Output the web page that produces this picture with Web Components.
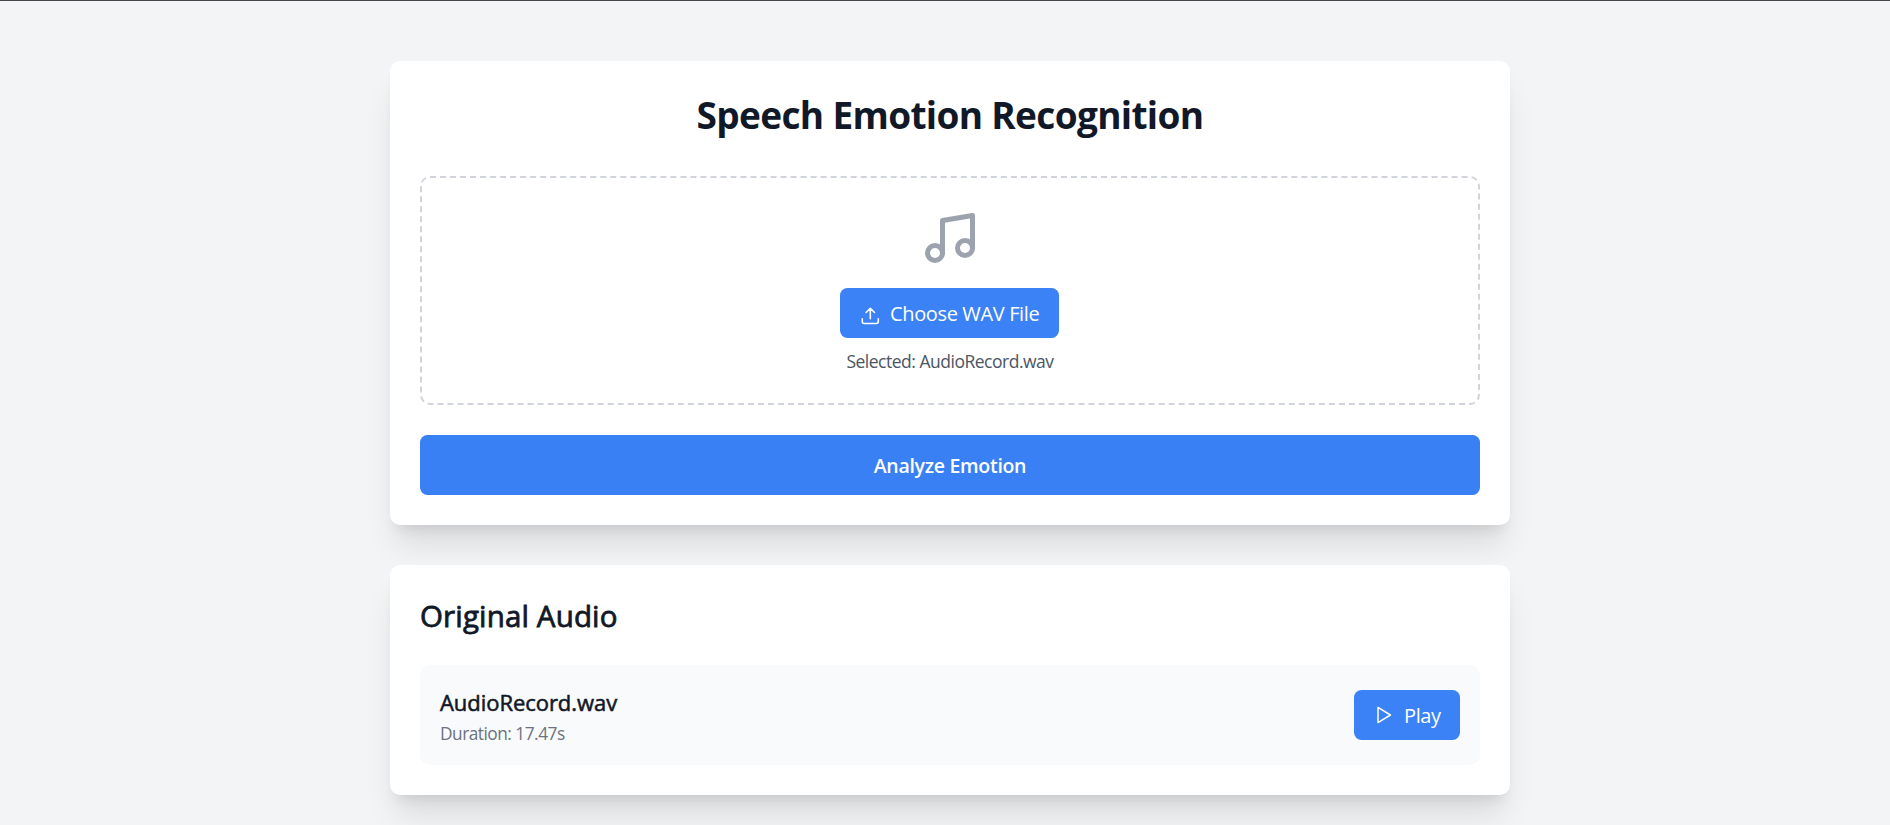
<!DOCTYPE html>
<html lang="en">
<head>
<meta charset="utf-8">
<title>Speech Emotion Recognition</title>
<style>
html{font-size:20px}
body{margin:0;height:825px;overflow:hidden;background:#f3f4f6;font-family:"Open Sans","Noto Sans",sans-serif;color:#111827}
</style>
</head>
<body>
<emotion-app></emotion-app>
<script>
function define(name, markup) {
  const t = document.createElement('template');
  t.innerHTML = '<style>*{box-sizing:border-box}:host{box-sizing:border-box}</style>' + markup;
  customElements.define(name, class extends HTMLElement {
    constructor() { super(); this.attachShadow({mode:'open'}).append(t.content.cloneNode(true)); }
  });
}
define('ui-card', `<style>
:host{display:block;background:#fff;border-radius:10px;padding:30px;box-shadow:0 25px 31.25px -6.25px rgba(0,0,0,.1),0 10px 12.5px -7.5px rgba(0,0,0,.1)}
</style><slot></slot>`);
define('ui-button', `<style>
:host{display:flex;align-items:center;gap:10px;width:max-content;height:50px;padding:10px 20px;border-radius:7.5px;background:#3b82f6;color:#fff;font-size:20px;line-height:30px;letter-spacing:-.36px;white-space:nowrap}
:host([block]){width:auto;height:60px;justify-content:center;background:#3980f5;font-weight:600;font-size:19.5px;letter-spacing:-.3px}
.text{padding-top:2px}
::slotted(svg){flex:none;overflow:visible}
</style><slot name="icon"></slot><span class="text"><slot></slot></span>`);
define('file-drop', `<style>
:host{display:flex;flex-direction:column;align-items:center;height:229px;border:2px dashed #d1d5db;border-radius:10px;padding:30px}
.note{width:60px;height:60px;margin-bottom:20px;color:#9ca3af;flex:none}
ui-button{flex:none;width:219px;margin-right:1px}
p{margin:11px 0 0;font-size:17.5px;line-height:25px;color:#4b5563;letter-spacing:-.49px;white-space:nowrap}
</style>
<svg class="note" viewBox="0 0 24 24" fill="none" stroke="currentColor" stroke-width="2" stroke-linecap="round" stroke-linejoin="round"><path d="M9 18V5l12-2v13"/><circle cx="6" cy="18" r="3"/><circle cx="18" cy="16" r="3"/></svg>
<ui-button><svg slot="icon" width="20" height="20" viewBox="0 0 20 20" fill="none" stroke="currentColor" stroke-width="1.6" stroke-linecap="round" stroke-linejoin="round"><path d="M2.3 15.8v2.7a2 2 0 0 0 2 2h12a2 2 0 0 0 2-2v-2.7M10.3 15.7V5.4M6.1 9.5l4.2-4.2 4.2 4.2"/></svg>Choose WAV File</ui-button>
<p>Selected: AudioRecord.wav</p>`);
define('audio-row', `<style>
:host{display:flex;align-items:center;justify-content:space-between;height:100px;padding:20px;border-radius:10px;background:#f9fafb}
.name{margin:0;font-size:22px;line-height:35px;letter-spacing:-.05px;-webkit-text-stroke:.55px currentColor}
.time{margin:0;padding-top:1px;height:25px;font-size:17.3px;line-height:25px;color:#6b7280;letter-spacing:-.5px}
ui-button{width:106px}
</style>
<div><p class="name">AudioRecord.wav</p><p class="time">Duration: 17.47s</p></div>
<ui-button><svg slot="icon" width="20" height="20" viewBox="0 0 20 20" fill="none" stroke="currentColor" stroke-width="1.5" stroke-linejoin="round"><path d="M4 2.4v15.2L16.4 10z"/></svg>Play</ui-button>`);
define('emotion-app', `<style>
:host{display:block;height:825px;border-top:1px solid #47484b;padding:60px 0 0 10px}
main{width:1120px;margin:0 auto;display:flex;flex-direction:column;gap:40px}
h1{margin:0 0 39px;padding-top:1px;text-align:center;font-size:37px;line-height:45px;font-weight:700;letter-spacing:-.66px}
h2{margin:0 0 29px;padding-top:1px;font-size:29.5px;line-height:40px;font-weight:400;letter-spacing:.15px;-webkit-text-stroke:.8px currentColor}
file-drop{margin-bottom:30px}
</style>
<main><ui-card><h1>Speech Emotion Recognition</h1><file-drop></file-drop><ui-button block>Analyze Emotion</ui-button></ui-card>
<ui-card><h2>Original Audio</h2><audio-row></audio-row></ui-card></main>`);
</script>
</body>
</html>
